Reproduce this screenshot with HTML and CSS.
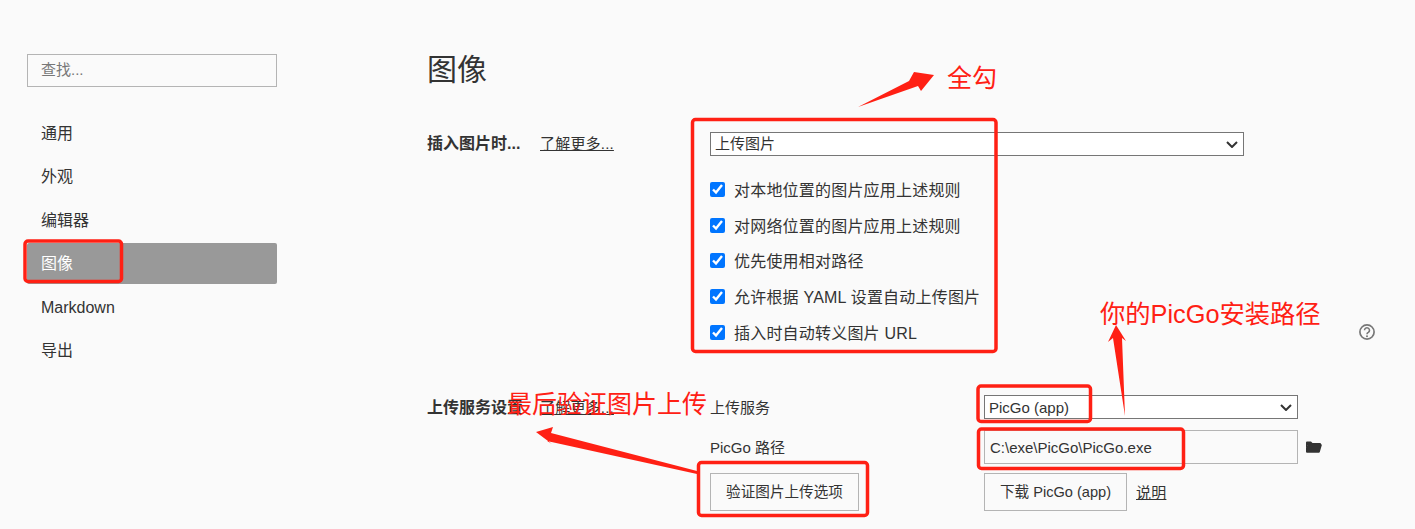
FILE: index.html
```html
<!DOCTYPE html>
<html lang="zh-CN">
<head>
<meta charset="utf-8">
<title>图像</title>
<link rel="stylesheet" href="styles.css">
</head>
<body>
<div class="app">
  <aside class="sidebar">
    <input class="search" type="text" placeholder="查找...">
    <nav class="nav">
      <a class="nav-item">通用</a>
      <a class="nav-item">外观</a>
      <a class="nav-item">编辑器</a>
      <a class="nav-item active">图像</a>
      <a class="nav-item">Markdown</a>
      <a class="nav-item">导出</a>
    </nav>
  </aside>
  <main class="main">
    <h1 class="title">图像</h1>
    <section class="insert">
      <div class="head"><b class="head-label">插入图片时...</b><a class="link">了解更多...</a></div>
      <div class="insert-body">
        <div class="select-wrap">
          <select class="select select-wide"><option>上传图片</option></select>
          <svg class="chevron" viewBox="0 0 12 7" width="12" height="7"><path d="M1 1l5 5 5-5" fill="none" stroke="#333" stroke-width="2"/></svg>
        </div>
        <div class="checks">
          <label class="check"><input type="checkbox" checked>对本地位置的图片应用上述规则</label>
          <label class="check"><input type="checkbox" checked>对网络位置的图片应用上述规则</label>
          <label class="check"><input type="checkbox" checked>优先使用相对路径</label>
          <label class="check"><input type="checkbox" checked>允许根据 YAML 设置自动上传图片</label>
          <label class="check"><input type="checkbox" checked>插入时自动转义图片 URL</label>
        </div>
      </div>
      <svg class="help" viewBox="0 0 16 16" width="16" height="16"><circle cx="8" cy="8" r="7.100" fill="none" stroke="#777" stroke-width="1.700"/><path d="M5.500 6.300a2.500 2.500 0 1 1 3.800 2.100c-.9.500-1.300 .9-1.300 1.800" fill="none" stroke="#777" stroke-width="1.600"/><circle cx="8" cy="12.200" r="1" fill="#777"/></svg>
    </section>
    <section class="upload">
      <div class="head head-upload"><b class="head-label">上传服务设置</b><a class="link">了解更多...</a></div>
      <div class="upload-grid">
        <span class="field-label">上传服务</span>
        <div class="select-wrap">
          <select class="select select-service"><option>PicGo (app)</option></select>
          <svg class="chevron" viewBox="0 0 12 7" width="12" height="7"><path d="M1 1l5 5 5-5" fill="none" stroke="#333" stroke-width="2"/></svg>
        </div>
        <span></span>
        <span class="field-label field-label-path">PicGo 路径</span>
        <input class="path" type="text" value="C:\exe\PicGo\PicGo.exe">
        <svg class="folder" viewBox="0 0 16 12" width="16" height="12"><path d="M0 1.500a1 1 0 0 1 1-1h4l1.500 1.500H14a1 1 0 0 1 1 1V4H2L0 8z" fill="#333"/><path d="M2 3.600H16L13.800 11a1 1 0 0 1-1 .7H1a1 1 0 0 1-1-.8V7z" fill="#333"/></svg>
        <button class="btn btn-verify">验证图片上传选项</button>
        <div class="actions"><button class="btn btn-download">下载 PicGo (app)</button><a class="link">说明</a></div>
      </div>
    </section>
  </main>
</div>
<svg class="marks" viewBox="0 0 1415 529" width="1415" height="529">
  <g fill="none" stroke="#ff2014" stroke-width="3.500">
    <rect x="25" y="241" width="96.500" height="40.500" rx="3"/>
    <rect x="692.500" y="119.500" width="303.500" height="232" rx="3"/>
    <rect x="978" y="386" width="112.500" height="35.500" rx="3"/>
    <rect x="978.500" y="429" width="205" height="39.500" rx="3"/>
    <rect x="698.500" y="462.500" width="169" height="53" rx="3"/>
  </g>
  <g fill="#ff2014">
    <polygon points="858,107 909,81 914,72 934,75 921,91 918,86"/>
    <polygon points="1116,325 1126,341 1122,338 1125,416 1113,338 1108,342"/>
    <polygon points="536,432 553,427 551,433 697,471 697,474 547,441 552,444"/>
  </g>
</svg>
<span class="note note-all">全勾</span>
<span class="note note-path">你的PicGo安装路径</span>
<span class="note note-verify">最后验证图片上传</span>
</body>
</html>
```

FILE: styles.css
```css
* { box-sizing: border-box; }
html, body { margin: 0; height: 529px; overflow: hidden; }
body {
  position: relative;
  background: #fafafa;
  color: #333;
  font: 15px/1.4 "Liberation Sans", "Noto Sans CJK SC", sans-serif;
}
.app { display: flex; height: 529px; }
.sidebar { width: 427px; flex: none; padding: 54px 0 0 27px; }
.search {
  display: block;
  width: 250px;
  height: 33px;
  padding: 0 13px 2px;
  border: 1px solid #b4b4b4;
  background: #fafafa;
  font: 15px "Liberation Sans", "Noto Sans CJK SC", sans-serif;
  color: #333;
}
.search::placeholder { color: #777; opacity: 1; }
.nav { display: flex; flex-direction: column; gap: 2.400px; width: 250px; margin-top: 25.800px; }
.nav-item { display: flex; align-items: center; height: 41px; padding: 2px 0 0 14px; border-radius: 2px; font-size: 16px; }
.nav-item.active { background: #999; color: #fff; }
.main { flex: 1; padding-top: 50px; min-width: 0; }
.title { margin: 0 0 42px; font-size: 30px; font-weight: 400; line-height: 40px; }
.insert { display: flex; height: 263px; }
.head { width: 283px; flex: none; display: flex; gap: 15px; font-size: 16px; padding-top: 1px; line-height: 22px; }
.head-label { font-weight: 700; width: 98px; flex: none; white-space: nowrap; }
.head-upload { padding-top: 2px; }
.link { text-decoration: underline; font-size: 15px; letter-spacing: .2px; color: #333; }
.insert-body { width: 534px; flex: none; }
.select-wrap { position: relative; }
.chevron { position: absolute; right: 6px; top: 9px; pointer-events: none; }
.select {
  display: block;
  appearance: none;
  background: #fff;
  border: 1px solid #767676;
  border-radius: 0;
  color: #333;
  font: 15px "Liberation Sans", "Noto Sans CJK SC", sans-serif;
}
.select-wide { width: 534px; height: 24px; padding: 0 0 2px 4px; }
.checks { display: flex; flex-direction: column; gap: 13.700px; margin-top: 23.500px; }
.check { display: flex; align-items: center; height: 22px; font-size: 16px; letter-spacing: .2px; padding-top: 1px; }
.check input {
  width: 15px;
  height: 15px;
  margin: -3px 9px 0 0;
  accent-color: #0075ff;
}
.help { flex: none; align-self: flex-end; margin: 0 0 55px 115px; }
.upload { display: flex; }
.upload-grid {
  display: grid;
  grid-template-columns: 274px 314px 24px;
  grid-template-rows: 24px 36px 38px;
  row-gap: 9px;
  align-items: center;
}
.field-label { font-size: 15px; }
.field-label-path { margin-top: 2px; }
.select-service { width: 314px; height: 24px; padding: 0 0 0 4px; }
.path {
  align-self: end;
  width: 314px;
  height: 34px;
  padding: 0 5px;
  border: 1px solid #b4b4b4;
  background: #fafafa;
  color: #333;
  font: 15px "Liberation Sans", "Noto Sans CJK SC", sans-serif;
}
.folder { margin: 2px 0 0 8px; }
.btn {
  height: 38px;
  border: 1px solid #b4b4b4;
  background: #fafafa;
  color: #333;
  font: 14.600px "Liberation Sans", "Noto Sans CJK SC", sans-serif;
  padding: 0 0 3px;
}
.btn-verify { width: 149px; }
.btn-download { width: 143px; }
.actions { display: flex; align-items: center; gap: 9px; grid-column: 2 / 4; }
.marks { position: absolute; left: 0; top: 0; pointer-events: none; }
.note { position: absolute; color: #ff2014; font-size: 25px; line-height: 34px; white-space: nowrap; }
.note-all { left: 947px; top: 61px; }
.note-path { left: 1100px; top: 297px; font-size: 25.300px; }
.note-verify { left: 507px; top: 387px; }
```
